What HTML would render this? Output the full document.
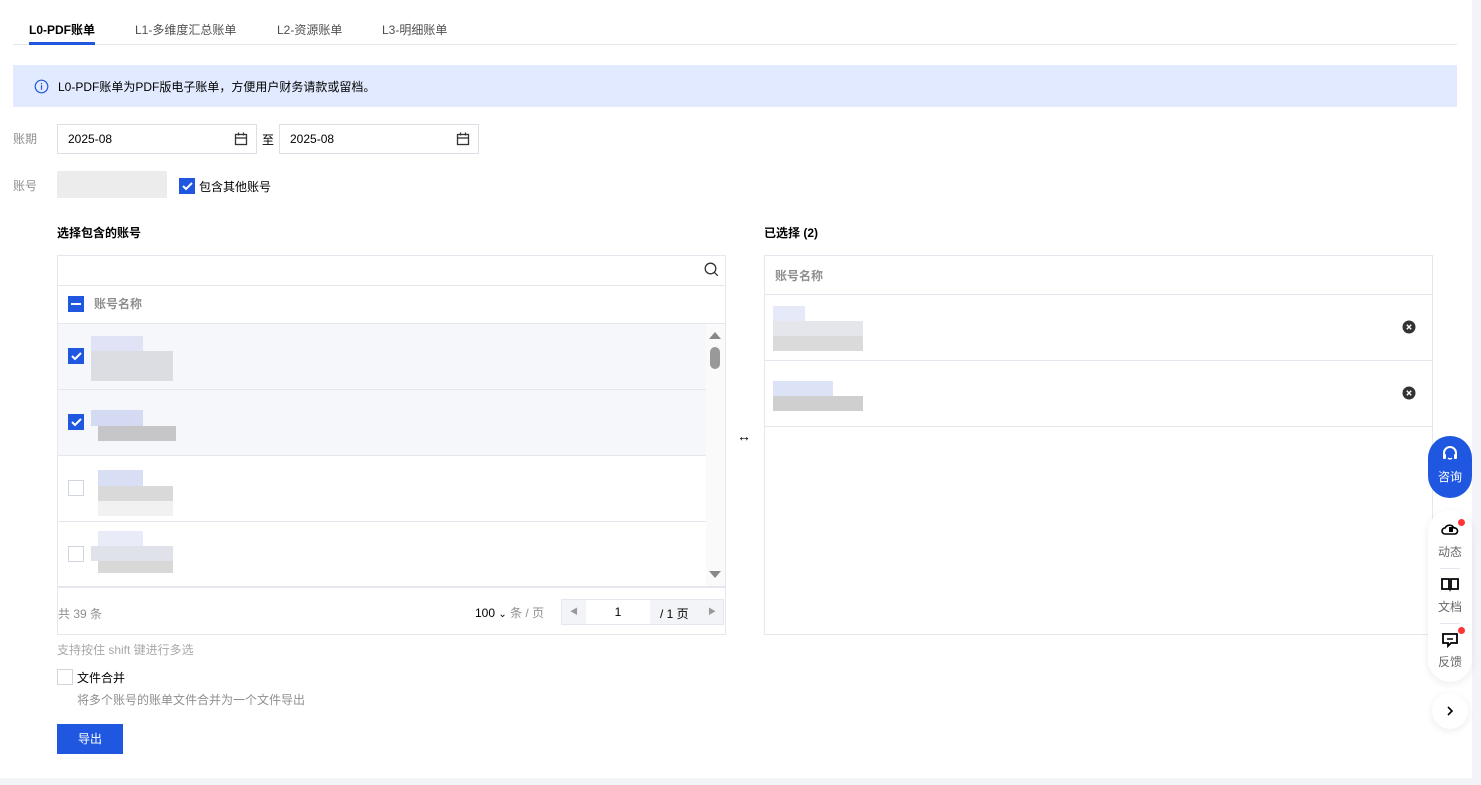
<!DOCTYPE html>
<html><head><meta charset="utf-8"><style>
*{box-sizing:border-box;margin:0;padding:0}
body{width:1481px;height:785px;position:relative;background:#f3f4f7;font-family:"Liberation Sans","Noto Sans CJK SC",sans-serif;font-size:12px;color:#000;overflow:hidden}
.main{position:absolute;left:0;top:0;width:1472px;height:778px;background:#fff}
.a{position:absolute}
.tab{position:absolute;top:21px;font-size:12px;color:rgba(0,0,0,.7)}
.cb{position:absolute;width:16px;height:16px;border:1px solid #cfd5de;background:#fff}
.cb.on{background:#1f57e0;border-color:#1f57e0}
.cb.on svg{position:absolute;left:2px;top:2px}
.blk{position:absolute}
.gray{color:rgba(0,0,0,.45)}
.line{position:absolute;height:1px;background:#e5e7ee}
</style></head><body>
<div class="main">
<div class="tab" style="left:29px;color:#000;font-weight:bold">L0-PDF账单</div>
<div class="tab" style="left:135px">L1-多维度汇总账单</div>
<div class="tab" style="left:277px">L2-资源账单</div>
<div class="tab" style="left:382px">L3-明细账单</div>
<div class="line" style="left:13px;top:44px;width:1444px"></div>
<div class="a" style="left:29px;top:42px;width:66px;height:3px;background:#1f57e0"></div>

<div class="a" style="left:13px;top:65px;width:1444px;height:42px;background:#e1eafe"></div>
<svg class="a" style="left:34px;top:79px" width="15" height="15" viewBox="0 0 15 15"><circle cx="7.5" cy="7.5" r="6.3" fill="none" stroke="#1f57e0" stroke-width="1.2"/><rect x="6.9" y="6.2" width="1.2" height="4.5" fill="#1f57e0"/><rect x="6.9" y="4" width="1.2" height="1.3" fill="#1f57e0"/></svg>
<div class="a" style="left:58px;top:78px">L0-PDF账单为PDF版电子账单，方便用户财务请款或留档。</div>

<div class="a gray" style="left:13px;top:130px">账期</div>
<div class="a" style="left:57px;top:124px;width:200px;height:30px;border:1px solid #dcdfe6"><span class="a" style="left:10px;top:7px">2025-08</span>
<svg class="a" style="left:176px;top:7px" width="14" height="14" viewBox="0 0 14 14"><rect x="1.5" y="2.5" width="11" height="10" fill="none" stroke="#333" stroke-width="1.3"/><line x1="1.5" y1="6" x2="12.5" y2="6" stroke="#333" stroke-width="1.3"/><line x1="4.5" y1="0.5" x2="4.5" y2="3.5" stroke="#333" stroke-width="1.3"/><line x1="9.5" y1="0.5" x2="9.5" y2="3.5" stroke="#333" stroke-width="1.3"/></svg></div>
<div class="a" style="left:262px;top:131px">至</div>
<div class="a" style="left:279px;top:124px;width:200px;height:30px;border:1px solid #dcdfe6"><span class="a" style="left:10px;top:7px">2025-08</span>
<svg class="a" style="left:176px;top:7px" width="14" height="14" viewBox="0 0 14 14"><rect x="1.5" y="2.5" width="11" height="10" fill="none" stroke="#333" stroke-width="1.3"/><line x1="1.5" y1="6" x2="12.5" y2="6" stroke="#333" stroke-width="1.3"/><line x1="4.5" y1="0.5" x2="4.5" y2="3.5" stroke="#333" stroke-width="1.3"/><line x1="9.5" y1="0.5" x2="9.5" y2="3.5" stroke="#333" stroke-width="1.3"/></svg></div>

<div class="a gray" style="left:13px;top:177px">账号</div>
<div class="a" style="left:57px;top:171px;width:110px;height:27px;background:#ececec"></div>
<div class="cb on" style="left:179px;top:178px"><svg width="11" height="10" viewBox="0 0 11 10"><path d="M1 5l3 3 6-6" fill="none" stroke="#fff" stroke-width="2"/></svg></div>
<div class="a" style="left:199px;top:178px">包含其他账号</div>

<div class="a" style="left:57px;top:224px;font-weight:bold">选择包含的账号</div>
<div class="a" style="left:764px;top:224px;font-weight:bold">已选择 (2)</div>

<div class="a" style="left:57px;top:255px;width:669px;height:380px;border:1px solid #e5e7ee">
<svg class="a" style="left:646px;top:6px" width="15" height="15" viewBox="0 0 15 15"><circle cx="6.5" cy="6.5" r="5.3" fill="none" stroke="#333" stroke-width="1.3"/><line x1="10.3" y1="10.3" x2="13.8" y2="13.8" stroke="#333" stroke-width="1.3"/></svg>
<div class="line" style="left:0;top:29px;width:667px"></div>
<div class="cb on" style="left:10px;top:40px"><div class="a" style="left:2px;top:6px;width:10px;height:2px;background:#fff"></div></div>
<div class="a gray" style="left:36px;top:39px;font-weight:bold">账号名称</div>
<div class="line" style="left:0;top:67px;width:667px"></div>
<div class="a" style="left:0;top:68px;width:648px;height:131px;background:#f6f7fb"></div>
<div class="line" style="left:0;top:133px;width:648px"></div>
<div class="line" style="left:0;top:199px;width:648px"></div>
<div class="line" style="left:0;top:265px;width:648px"></div>
<div class="a" style="left:0;top:330px;width:667px;height:2px;background:#e5e7ee"></div>
<div class="a" style="left:648px;top:68px;width:19px;height:262px;background:#fafafa"></div>
<div class="a" style="left:651px;top:76px;width:0;height:0;border-left:6px solid transparent;border-right:6px solid transparent;border-bottom:7px solid #888"></div>
<div class="a" style="left:652px;top:91px;width:10px;height:22px;border-radius:5px;background:#999"></div>
<div class="a" style="left:651px;top:315px;width:0;height:0;border-left:6px solid transparent;border-right:6px solid transparent;border-top:7px solid #888"></div>
<div class="cb on" style="left:10px;top:92px"><svg width="11" height="10" viewBox="0 0 11 10"><path d="M1 5l3 3 6-6" fill="none" stroke="#fff" stroke-width="2"/></svg></div>
<div class="cb on" style="left:10px;top:158px"><svg width="11" height="10" viewBox="0 0 11 10"><path d="M1 5l3 3 6-6" fill="none" stroke="#fff" stroke-width="2"/></svg></div>
<div class="cb" style="left:10px;top:224px"></div>
<div class="cb" style="left:10px;top:290px"></div>
<div class="blk" style="left:33px;top:80px;width:52px;height:15px;background:#dfe3f5"></div><div class="blk" style="left:33px;top:95px;width:82px;height:30px;background:#dcdde3"></div>
<div class="blk" style="left:33px;top:154px;width:52px;height:16px;background:#d4daf2"></div><div class="blk" style="left:40px;top:170px;width:78px;height:15px;background:#c6c6c9"></div>
<div class="blk" style="left:40px;top:214px;width:45px;height:16px;background:#d8def4"></div><div class="blk" style="left:40px;top:230px;width:75px;height:15px;background:#d9d9da"></div><div class="blk" style="left:40px;top:245px;width:75px;height:15px;background:#f1f1f1"></div>
<div class="blk" style="left:40px;top:275px;width:45px;height:15px;background:#e9ecf8"></div><div class="blk" style="left:33px;top:290px;width:82px;height:15px;background:#e0e2ea"></div><div class="blk" style="left:40px;top:305px;width:75px;height:12px;background:#d8d8d8"></div>
<div class="a gray" style="left:0;top:349px">共 39 条</div>
<div class="a" style="left:417px;top:348px">100 <span style="font-size:10px">⌄</span> <span class="gray">条 / 页</span></div>
<div class="a" style="left:503px;top:343px;width:163px;height:26px;border:1px solid #e5e7ee;background:#f3f4f7">
<span class="a" style="left:8px;top:6px;font-size:8px;color:#999">◀</span>
<div class="a" style="left:24px;top:0;width:64px;height:24px;background:#fff;text-align:center;line-height:24px">1</div>
<span class="a" style="left:98px;top:5px">/ 1 页</span>
<span class="a" style="left:146px;top:6px;font-size:8px;color:#999">▶</span>
</div>
</div>

<div class="a" style="left:737px;top:428px;font-size:14px">↔</div>

<div class="a" style="left:764px;top:255px;width:669px;height:380px;border:1px solid #e5e7ee">
<div class="a gray" style="left:10px;top:11px;font-weight:bold">账号名称</div>
<div class="line" style="left:0;top:38px;width:667px"></div>
<div class="line" style="left:0;top:104px;width:667px"></div>
<div class="line" style="left:0;top:170px;width:667px"></div>
<div class="blk" style="left:8px;top:50px;width:32px;height:15px;background:#e6eaf8"></div><div class="blk" style="left:8px;top:65px;width:90px;height:15px;background:#e5e6ec"></div><div class="blk" style="left:8px;top:80px;width:90px;height:15px;background:#dadada"></div>
<div class="blk" style="left:8px;top:125px;width:60px;height:15px;background:#dde3f7"></div><div class="blk" style="left:8px;top:140px;width:90px;height:15px;background:#cfcfcf"></div>
<svg class="a" style="left:637px;top:64px" width="14" height="14" viewBox="0 0 14 14"><circle cx="7" cy="7" r="6.5" fill="#333"/><path d="M4.8 4.8l4.4 4.4M9.2 4.8l-4.4 4.4" stroke="#fff" stroke-width="1.4"/></svg>
<svg class="a" style="left:637px;top:130px" width="14" height="14" viewBox="0 0 14 14"><circle cx="7" cy="7" r="6.5" fill="#333"/><path d="M4.8 4.8l4.4 4.4M9.2 4.8l-4.4 4.4" stroke="#fff" stroke-width="1.4"/></svg>
</div>

<div class="a" style="left:57px;top:641px;color:rgba(0,0,0,.35)">支持按住 shift 键进行多选</div>
<div class="cb" style="left:57px;top:669px"></div>
<div class="a" style="left:77px;top:669px">文件合并</div>
<div class="a gray" style="left:77px;top:691px">将多个账号的账单文件合并为一个文件导出</div>
<div class="a" style="left:57px;top:724px;width:66px;height:30px;background:#1f57e0;color:#fff;text-align:center;line-height:30px">导出</div>
</div>

<div class="a" style="left:1428px;top:436px;width:44px;height:62px;border-radius:22px;background:#1f57e0;color:#fff;text-align:center">
<svg style="position:absolute;left:13px;top:9px" width="18" height="18" viewBox="0 0 18 18"><path d="M3 10V8a6 6 0 0 1 12 0v2" fill="none" stroke="#fff" stroke-width="2"/><rect x="2" y="9" width="3" height="5" rx="1" fill="#fff"/><rect x="13" y="9" width="3" height="5" rx="1" fill="#fff"/><path d="M7 13q2 2 4 0" fill="none" stroke="#fff" stroke-width="1.4"/></svg>
<div style="position:absolute;left:0;width:44px;top:32px;font-size:12px">咨询</div></div>
<div class="a" style="left:1428px;top:510px;width:44px;height:172px;border-radius:22px;background:#fff;box-shadow:0 2px 8px rgba(0,0,0,.08);text-align:center;color:rgba(0,0,0,.6)">
<svg style="position:absolute;left:13px;top:11px" width="18" height="16" viewBox="0 0 18 16"><path d="M5 13H4a3 3 0 0 1 0-6 5 5 0 0 1 9 0 3 3 0 0 1 1 6H5z" fill="none" stroke="#000" stroke-width="1.6"/><rect x="8" y="6" width="4" height="5" fill="#000"/></svg>
<div class="a" style="left:30px;top:9px;width:7px;height:7px;border-radius:50%;background:#f33"></div>
<div class="a" style="left:0;width:44px;top:33px">动态</div>
<div class="a" style="left:12px;top:58px;width:20px;height:1px;background:#e5e7ee"></div>
<svg style="position:absolute;left:13px;top:67px" width="18" height="16" viewBox="0 0 18 16"><path d="M1 2h7v10H1zM10 2h7v10h-7z" fill="none" stroke="#000" stroke-width="1.8"/><path d="M8 12l1 3 1-3" fill="#000"/></svg>
<div class="a" style="left:0;width:44px;top:88px">文档</div>
<div class="a" style="left:12px;top:113px;width:20px;height:1px;background:#e5e7ee"></div>
<svg style="position:absolute;left:13px;top:122px" width="18" height="16" viewBox="0 0 18 16"><path d="M2 2h14v9h-6l-3 3v-3H2z" fill="none" stroke="#000" stroke-width="1.8"/><line x1="6" y1="7" x2="12" y2="7" stroke="#000" stroke-width="1.5"/></svg>
<div class="a" style="left:30px;top:117px;width:7px;height:7px;border-radius:50%;background:#f33"></div>
<div class="a" style="left:0;width:44px;top:143px">反馈</div>
</div>
<div class="a" style="left:1432px;top:693px;width:36px;height:36px;border-radius:50%;background:#fff;box-shadow:0 2px 8px rgba(0,0,0,.08)">
<svg style="position:absolute;left:13px;top:13px" width="10" height="10" viewBox="0 0 10 10"><path d="M3 1l4 4-4 4" fill="none" stroke="#000" stroke-width="1.6"/></svg></div>
</body></html>
